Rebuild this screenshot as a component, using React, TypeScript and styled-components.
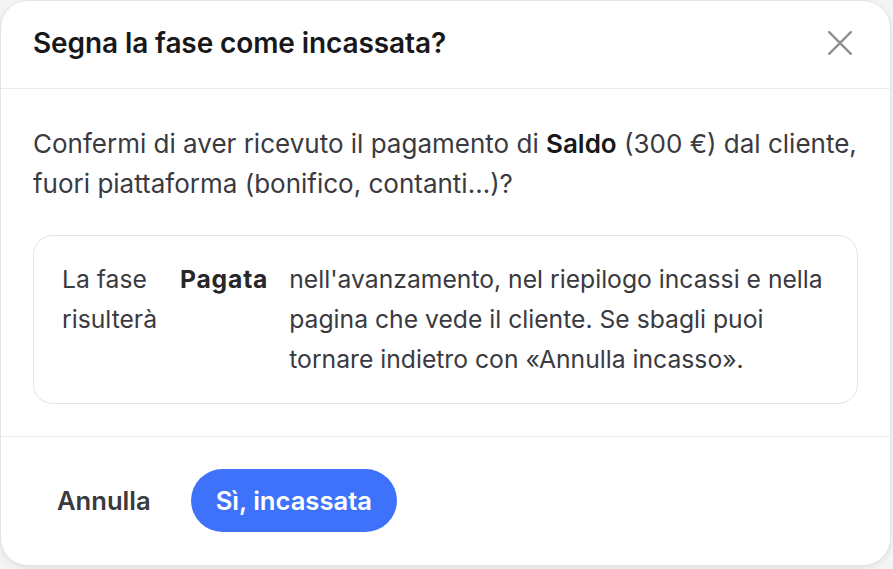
import React from "react";
import styled, { createGlobalStyle } from "styled-components";

const Global = createGlobalStyle`
  html, body { margin: 0; padding: 0; background: #f4f4f5; }
  body { font-family: Inter, "Noto Sans", sans-serif; -webkit-font-smoothing: antialiased; }
  * { box-sizing: border-box; }
`;

const Page = styled.div`
  width: 893px;
  height: 569px;
  padding: 0 2px 3px 0;
  background: #f4f4f5;
`;

const Dialog = styled.div`
  width: 891px;
  height: 566px;
  background: #ffffff;
  border: 1px solid #e4e4e7;
  border-radius: 28px;
  box-shadow: 0 2px 6px rgba(0, 0, 0, 0.08);
  display: flex;
  flex-direction: column;
  overflow: hidden;
`;

const Header = styled.div`
  height: 88px;
  flex: none;
  display: flex;
  align-items: center;
  justify-content: space-between;
  padding: 0 36px 4px 32px;
  border-bottom: 1.5px solid #ececee;
`;

const Title = styled.h2`
  margin: 0;
  font-size: 28px;
  font-weight: 600;
  color: #18181b;
  letter-spacing: -0.1px;
`;

const Close = styled.button`
  width: 28px;
  height: 28px;
  padding: 0;
  border: none;
  background: none;
  display: flex;
  align-items: center;
  justify-content: center;
  color: #8e8e93;
`;

const Body = styled.div`
  flex: 1;
  padding: 35px 32px 32px;
  border-bottom: 1.5px solid #ececee;
`;

const Lead = styled.p`
  margin: 0 0 31px;
  font-size: 26px;
  line-height: 40px;
  color: #3a3a40;
  strong { font-weight: 600; color: #18181b; }
`;

const InfoBox = styled.div`
  border: 1.5px solid #e4e4e7;
  border-radius: 20px;
  padding: 23px 16px 24px 28px;
  display: flex;
  gap: 21px;
  font-size: 24.7px;
  line-height: 40px;
  color: #3a3a40;
`;

const Lead1 = styled.span`
  flex: none;
  width: 97px;
`;

const Strong = styled.strong`
  font-weight: 700;
  letter-spacing: 0.8px;
  color: #27272a;
  flex: none;
`;

const Footer = styled.div`
  height: 130px;
  flex: none;
  display: flex;
  align-items: center;
  gap: 16px;
  padding: 0 32px 3px;
`;

const Button = styled.button<{ $primary?: boolean }>`
  height: 63px;
  padding: 0 ${(p) => (p.$primary ? "25px" : "24px")};
  border: none;
  border-radius: 32px;
  font-family: inherit;
  font-size: 25.6px;
  font-weight: 600;
  background: ${(p) => (p.$primary ? "#3f72fb" : "transparent")};
  color: ${(p) => (p.$primary ? "#ffffff" : "#3a3a40")};
`;

export default function App() {
  return (
    <>
      <Global />
      <Page>
        <Dialog>
          <Header>
            <Title>Segna la fase come incassata?</Title>
            <Close aria-label="Chiudi">
              <svg width="26" height="26" viewBox="0 0 24 24" fill="none" stroke="currentColor" strokeWidth="2.2" strokeLinecap="round">
                <path d="M2 2 L22 22 M22 2 L2 22" />
              </svg>
            </Close>
          </Header>
          <Body>
            <Lead>
              Confermi di aver ricevuto il pagamento di <strong>Saldo</strong> (300 €) dal cliente, fuori piattaforma (bonifico, contanti…)?
            </Lead>
            <InfoBox>
              <Lead1>La fase risulterà</Lead1>
              <Strong>Pagata</Strong>
              <span>nell'avanzamento, nel riepilogo incassi e nella pagina che vede il cliente. Se sbagli puoi tornare indietro con «Annulla incasso».</span>
            </InfoBox>
          </Body>
          <Footer>
            <Button>Annulla</Button>
            <Button $primary>Sì, incassata</Button>
          </Footer>
        </Dialog>
      </Page>
    </>
  );
}
